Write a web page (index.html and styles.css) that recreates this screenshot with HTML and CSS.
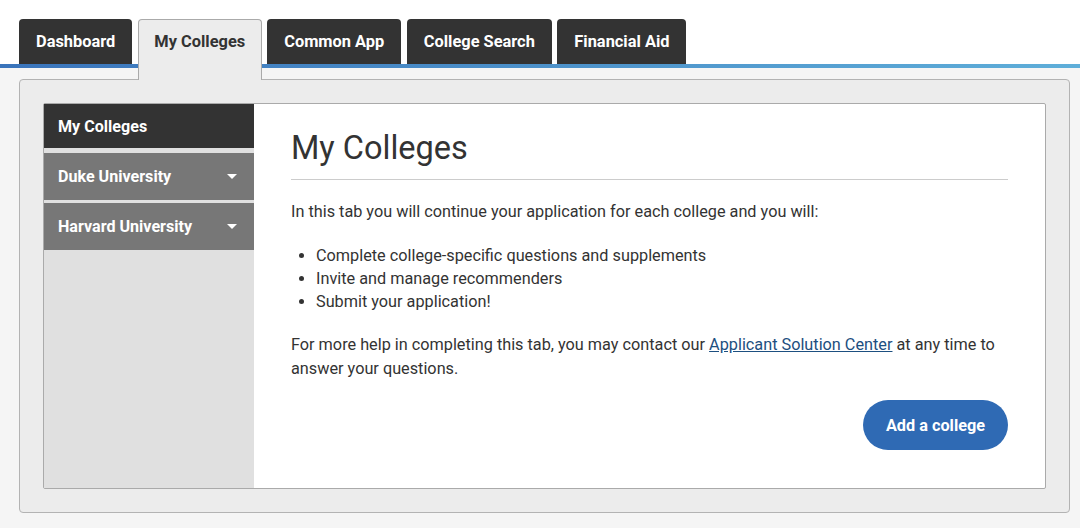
FILE: index.html
```html
<!DOCTYPE html>
<html lang="en">
<head>
<meta charset="utf-8">
<title>My Colleges</title>
<link rel="stylesheet" href="styles.css">
</head>
<body>
<nav class="tabbar">
  <a class="tab">Dashboard</a>
  <a class="tab tab-active">My Colleges</a>
  <a class="tab">Common App</a>
  <a class="tab">College Search</a>
  <a class="tab">Financial Aid</a>
</nav>
<div class="rule"></div>
<div class="stage">
  <section class="panel">
    <div class="inner">
      <aside class="sidebar">
        <div class="side-item side-current">My Colleges</div>
        <div class="side-item side-college">Duke University<span class="caret"></span></div>
        <div class="side-item side-college">Harvard University<span class="caret"></span></div>
      </aside>
      <main class="content">
        <h1 class="title">My Colleges</h1>
        <p class="intro">In this tab you will continue your application for each college and you will:</p>
        <ul class="list">
          <li>Complete college-specific questions and supplements</li>
          <li>Invite and manage recommenders</li>
          <li>Submit your application!</li>
        </ul>
        <p class="help">For more help in completing this tab, you may contact our <a class="link" href="#">Applicant Solution Center</a> at any time to answer your questions.</p>
        <div class="actions">
          <button class="btn">Add a college</button>
        </div>
      </main>
    </div>
  </section>
</div>
</body>
</html>
```

FILE: styles.css
```css
* { box-sizing: border-box; }
html, body {
  margin: 0;
  padding: 0;
  background: #f5f5f5;
  font-family: Roboto, "Liberation Sans", Arial, sans-serif;
  color: #333;
}
.tabbar {
  display: flex;
  align-items: flex-start;
  gap: 5.5px;
  padding: 19px 0 0 19px;
  height: 64px;
  background: #fff;
}
.tab {
  display: flex;
  align-items: center;
  height: 45px;
  padding: 0 17px;
  background: #333;
  color: #fff;
  font-weight: 700;
  font-size: 16.4px;
  border-radius: 4px 4px 0 0;
  text-decoration: none;
}
.tab-active {
  position: relative;
  z-index: 2;
  height: 61px;
  align-items: flex-start;
  padding: 12px 15.5px 0;
  background: #ececec;
  color: #333;
  border: 1px solid #aaa;
  border-bottom: none;
}
.rule {
  height: 4px;
  background: linear-gradient(to right, #3a74bb, #5eaed9);
}
.stage {
  padding: 11px 10px 14px 19px;
}
.panel {
  background: #ececec;
  border: 1px solid #b3b3b3;
  border-radius: 4px;
  padding: 23px;
}
.inner {
  display: flex;
  height: 386px;
  border: 1px solid #aaa;
  border-radius: 2px;
  background: #fff;
}
.sidebar {
  width: 210px;
  flex: none;
  background: #e0e0e0;
  display: flex;
  flex-direction: column;
}
.side-item {
  display: flex;
  align-items: center;
  justify-content: space-between;
  padding: 0 17px 0 14px;
  color: #fff;
  font-weight: 700;
  font-size: 16.1px;
}
.side-current {
  height: 44px;
  background: #333;
  margin-bottom: 5px;
}
.side-college {
  height: 47px;
  background: #777;
  margin-bottom: 3px;
}
.caret {
  width: 0;
  height: 0;
  border-left: 5.5px solid transparent;
  border-right: 5.5px solid transparent;
  border-top: 5.5px solid #fff;
}
.content {
  flex: 1;
  padding: 25px 37px 0 37px;
}
.title {
  margin: 0;
  font-size: 32.5px;
  font-weight: 400;
  line-height: 38px;
  padding-bottom: 12px;
  border-bottom: 1px solid #ccc;
}
.intro {
  margin: 20px 0 0;
  font-size: 16.25px;
  line-height: 24px;
}
.list {
  margin: 19px 0 0;
  padding-left: 25px;
  font-size: 16.25px;
  line-height: 23px;
}
.list li:first-child { padding-top: 1px; }
.help {
  margin: 20px 0 0;
  font-size: 16.25px;
  line-height: 24px;
}
.link {
  color: #1d4f80;
  text-decoration: underline;
}
.actions {
  display: flex;
  justify-content: flex-end;
  margin-top: 19px;
}
.btn {
  width: 145px;
  height: 50px;
  border: none;
  border-radius: 25px;
  background: #2f6ab4;
  color: #fff;
  font-family: inherit;
  font-weight: 700;
  font-size: 16.25px;
}
```
